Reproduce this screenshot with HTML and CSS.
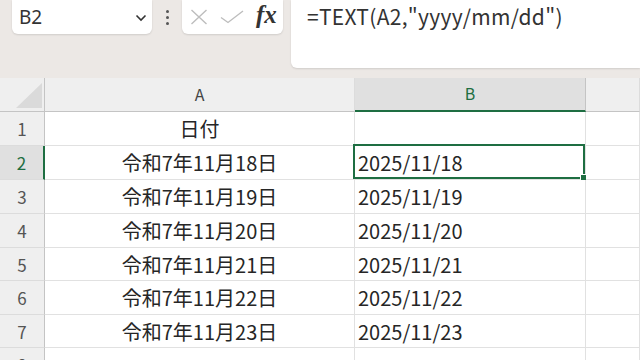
FILE: index.html
```html
<!DOCTYPE html>
<html lang="ja">
<head>
    <meta charset="UTF-8">
    <meta name="viewport" content="width=device-width, initial-scale=1.0">
    <title>TEXT関数</title>
    <link rel="stylesheet" href="styles.css">
</head>
<body>
    <div class="formula-bar">
        <div class="name-box">
            <span>B2</span>
            <svg class="chevron" width="12" height="8" viewBox="0 0 12 8"><path d="M1.5 1.5 L6 6 L10.5 1.5" fill="none" stroke="#333" stroke-width="1.6"/></svg>
        </div>
        <div class="grip"><i></i><i></i><i></i></div>
        <div class="fx-box">
            <svg width="18" height="16" viewBox="0 0 18 16"><path d="M1.5 1 L16.5 15 M16.5 1 L1.5 15" fill="none" stroke="#bdbdbd" stroke-width="1.4"/></svg>
            <svg width="24" height="14" viewBox="0 0 24 14"><path d="M1 7.5 L8 12.5 L23 1" fill="none" stroke="#bdbdbd" stroke-width="1.4"/></svg>
            <span class="fx">fx</span>
        </div>
        <div class="formula">=TEXT(A2,"yyyy/mm/dd")</div>
    </div>

    <div class="sheet">
        <div class="corner"></div>
        <div class="col-head">A</div>
        <div class="col-head selected">B</div>
        <div class="col-head"></div>

        <div class="row-head">1</div>
        <div class="cell center">日付</div>
        <div class="cell"></div>
        <div class="cell"></div>

        <div class="row-head selected">2</div>
        <div class="cell center">令和7年11月18日</div>
        <div class="cell active">2025/11/18<div class="cursor"><span class="handle"></span></div></div>
        <div class="cell"></div>

        <div class="row-head">3</div>
        <div class="cell center">令和7年11月19日</div>
        <div class="cell">2025/11/19</div>
        <div class="cell"></div>

        <div class="row-head">4</div>
        <div class="cell center">令和7年11月20日</div>
        <div class="cell">2025/11/20</div>
        <div class="cell"></div>

        <div class="row-head">5</div>
        <div class="cell center">令和7年11月21日</div>
        <div class="cell">2025/11/21</div>
        <div class="cell"></div>

        <div class="row-head">6</div>
        <div class="cell center">令和7年11月22日</div>
        <div class="cell">2025/11/22</div>
        <div class="cell"></div>

        <div class="row-head">7</div>
        <div class="cell center">令和7年11月23日</div>
        <div class="cell">2025/11/23</div>
        <div class="cell"></div>

        <div class="row-head">8</div>
        <div class="cell"></div>
        <div class="cell"></div>
        <div class="cell"></div>
    </div>
</body>
</html>
```

FILE: styles.css
```css
* {
    box-sizing: border-box;
}
body {
    margin: 0;
    padding: 0;
    background: #fff;
    font-family: "Noto Sans CJK JP", "Noto Sans", sans-serif;
    color: #222;
    overflow: hidden;
}
.formula-bar {
    display: flex;
    align-items: flex-start;
    height: 78px;
    padding-left: 12px;
    background: #ece8e5;
}
.name-box {
    width: 140px;
    height: 34px;
    background: #fff;
    border-radius: 0 0 6px 6px;
    box-shadow: 0 1px 2px rgba(0, 0, 0, 0.12);
    display: flex;
    align-items: center;
    justify-content: space-between;
    padding: 0 5px 0 7px;
    font-family: "Noto Sans", sans-serif;
    font-size: 19px;
    color: #333;
}
.chevron {
    margin-top: 1px;
}
.grip {
    width: 30px;
    height: 34px;
    display: flex;
    flex-direction: column;
    align-items: center;
    justify-content: center;
    gap: 3px;
}
.grip i {
    width: 3px;
    height: 3px;
    border-radius: 50%;
    background: #555;
}
.fx-box {
    width: 101px;
    height: 34px;
    background: #fff;
    border-radius: 0 0 6px 6px;
    box-shadow: 0 1px 2px rgba(0, 0, 0, 0.12);
    display: flex;
    align-items: center;
    gap: 12px;
    padding-left: 8px;
}
.fx {
    font-family: "Liberation Serif", serif;
    font-style: italic;
    font-weight: bold;
    font-size: 25px;
    color: #333;
    margin-top: -4px;
}
.formula {
    flex: 1;
    height: 68px;
    margin-left: 8px;
    background: #fff;
    border-radius: 0 0 0 6px;
    box-shadow: 0 1px 2px rgba(0, 0, 0, 0.12);
    padding: 0 0 0 16px;
    font-size: 21px;
    letter-spacing: 0.3px;
    color: #333;
    line-height: 32px;
}
.sheet {
    display: grid;
    grid-template-columns: 45px 310px 231px 1fr;
    grid-template-rows: 34px 34px 34px 34px 34px 33px 34px 33px 34px;
}
.corner {
    position: relative;
    background: #efefef;
    border-right: 1px solid #c4c4c4;
    border-bottom: 1px solid #c4c4c4;
}
.corner::after {
    content: "";
    position: absolute;
    right: 2px;
    bottom: 3px;
    width: 0;
    height: 0;
    border-left: 26px solid transparent;
    border-bottom: 25px solid #dadada;
}
.col-head {
    background: #efefef;
    border-right: 1px solid #dcdcdc;
    border-bottom: 1px solid #c4c4c4;
    display: flex;
    align-items: center;
    justify-content: center;
    font-size: 16px;
    color: #444;
    padding-bottom: 2px;
}
.col-head.selected {
    background: #e0e0e0;
    color: #1e6e42;
    border-bottom: 2px solid #1e6e42;
    border-right-color: #c4c4c4;
}
.row-head {
    background: #efefef;
    border-right: 1px solid #c4c4c4;
    border-bottom: 1px solid #dcdcdc;
    display: flex;
    align-items: center;
    justify-content: center;
    font-size: 17px;
    color: #555;
}
.row-head.selected {
    background: #e0e0e0;
    color: #1e6e42;
    border-right: 2px solid #1e6e42;
}
.cell {
    position: relative;
    border-right: 1px solid #e1e1e1;
    border-bottom: 1px solid #e1e1e1;
    display: flex;
    align-items: center;
    padding-left: 3px;
    font-size: 20px;
    color: #262626;
    white-space: nowrap;
}
.cell.center {
    justify-content: center;
    padding-left: 0;
}
.cursor {
    position: absolute;
    top: -2px;
    left: -2px;
    right: 0;
    bottom: 0;
    border: 2px solid #1e6e42;
}
.handle {
    position: absolute;
    right: -4px;
    bottom: -4px;
    width: 7px;
    height: 7px;
    background: #1e6e42;
    border: 1px solid #fff;
}
```
